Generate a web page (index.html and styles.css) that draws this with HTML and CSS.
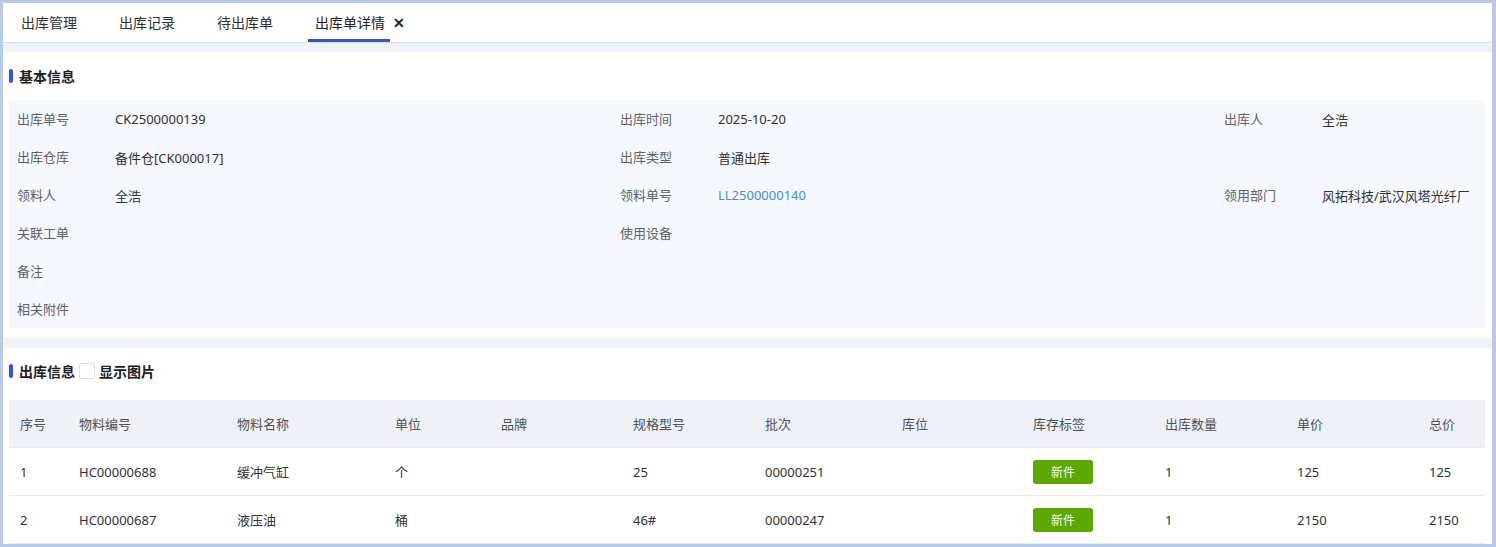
FILE: index.html
```html
<!DOCTYPE html>
<html lang="zh-CN">
<head>
<meta charset="utf-8">
<title>出库单详情</title>
<link rel="stylesheet" href="styles.css">
</head>
<body>
<div class="frame">
  <div class="tabs">
    <div class="tab">出库管理</div>
    <div class="tab">出库记录</div>
    <div class="tab">待出库单</div>
    <div class="tab active"><span class="tab-label">出库单详情</span><span class="tab-close">✕</span></div>
  </div>

  <div class="card card-basic">
    <div class="section-title"><span class="bar"></span>基本信息</div>
    <div class="info">
      <div class="item"><span class="label">出库单号</span><span class="value">CK2500000139</span></div>
      <div class="item"><span class="label">出库时间</span><span class="value">2025-10-20</span></div>
      <div class="item"><span class="label">出库人</span><span class="value">全浩</span></div>

      <div class="item"><span class="label">出库仓库</span><span class="value">备件仓[CK000017]</span></div>
      <div class="item"><span class="label">出库类型</span><span class="value">普通出库</span></div>
      <div class="item"></div>

      <div class="item"><span class="label">领料人</span><span class="value">全浩</span></div>
      <div class="item"><span class="label">领料单号</span><span class="value link">LL2500000140</span></div>
      <div class="item"><span class="label">领用部门</span><span class="value">风拓科技/武汉风塔光纤厂</span></div>

      <div class="item"><span class="label">关联工单</span><span class="value"></span></div>
      <div class="item"><span class="label">使用设备</span><span class="value"></span></div>
      <div class="item"></div>

      <div class="item"><span class="label">备注</span><span class="value"></span></div>
      <div class="item"></div>
      <div class="item"></div>

      <div class="item"><span class="label">相关附件</span><span class="value"></span></div>
      <div class="item"></div>
      <div class="item"></div>
    </div>
  </div>

  <div class="card card-table">
    <div class="section-title"><span class="bar"></span>出库信息<span class="checkbox"></span>显示图片</div>
    <div class="table">
      <div class="tr th">
        <div class="c c1">序号</div><div class="c c2">物料编号</div><div class="c c3">物料名称</div><div class="c c4">单位</div><div class="c c5">品牌</div><div class="c c6">规格型号</div><div class="c c7">批次</div><div class="c c8">库位</div><div class="c c9">库存标签</div><div class="c c10">出库数量</div><div class="c c11">单价</div><div class="c c12">总价</div>
      </div>
      <div class="tr">
        <div class="c c1">1</div><div class="c c2">HC00000688</div><div class="c c3">缓冲气缸</div><div class="c c4">个</div><div class="c c5"></div><div class="c c6">25</div><div class="c c7">00000251</div><div class="c c8"></div><div class="c c9"><span class="badge">新件</span></div><div class="c c10">1</div><div class="c c11">125</div><div class="c c12">125</div>
      </div>
      <div class="tr">
        <div class="c c1">2</div><div class="c c2">HC00000687</div><div class="c c3">液压油</div><div class="c c4">桶</div><div class="c c5"></div><div class="c c6">46#</div><div class="c c7">00000247</div><div class="c c8"></div><div class="c c9"><span class="badge">新件</span></div><div class="c c10">1</div><div class="c c11">2150</div><div class="c c12">2150</div>
      </div>
    </div>
  </div>
</div>
</body>
</html>
```

FILE: styles.css
```css
* { box-sizing: border-box; }
html, body { margin: 0; padding: 0; }
body {
  font-family: "Noto Sans", "Noto Sans CJK SC", sans-serif;
  color: #303133;
  background: #ffffff;
}
.frame {
  width: 1496px;
  height: 547px;
  border: 3px solid #b8c8ea;
  border-right-width: 4px;
  background: #eff3fa;
  overflow: hidden;
  display: flex;
  flex-direction: column;
}
.tabs {
  height: 40px;
  flex: none;
  background: #ffffff;
  border-bottom: 1px solid #dadde3;
  display: flex;
  align-items: stretch;
  padding-left: 11px;
  margin-bottom: 9px;
}
.tab {
  font-size: 14px;
  line-height: 20px;
  color: #303133;
  margin-right: 28px;
  display: flex;
  align-items: center;
  padding-top: 1px;
}
.tab:not(.active) { padding-left: 7px; padding-right: 7px; }
.tab-label {
  padding: 2px 5px 0 7px;
  height: 100%;
  display: flex;
  align-items: center;
  border-bottom: 3px solid #2457f0;
  color: #1d2129;
}
.tab-close {
  font-size: 14px;
  font-weight: 600;
  margin-left: 3px;
  color: #1d2129;
  padding-bottom: 1px;
}
.card {
  background: #ffffff;
  padding: 0 6px;
  flex: none;
}
.card-basic {
  height: 286px;
  padding-bottom: 11px;
}
.card-table {
  margin-top: 10px;
  flex: 1;
}
.section-title {
  height: 48px;
  display: flex;
  align-items: center;
  font-size: 14px;
  font-weight: 700;
  color: #1d1d1f;
}
.card-table .section-title { height: 52px; padding-bottom: 6px; }
.bar {
  width: 4px;
  height: 14px;
  border-radius: 2px;
  background: #2457f0;
  margin-right: 6px;
}
.checkbox {
  width: 16px;
  height: 16px;
  border: 1px solid #dcdfe6;
  border-radius: 2px;
  background: #fff;
  margin: 0 4px 0 4px;
}
.info {
  background: #f5f8fd;
  display: grid;
  grid-template-columns: 603px 604px 1fr;
  grid-auto-rows: 38px;
  margin-right: 1px;
}
.item {
  display: flex;
  align-items: center;
  font-size: 13px;
  padding-left: 8px;
}
.label {
  width: 98px;
  flex: none;
  color: #606266;
  position: relative;
  top: -1px;
}
.value { color: #303133; }
.value.link { color: #3a8ee6; }

.table { font-size: 13px; margin-right: 1px; }
.tr {
  display: flex;
  height: 48px;
  border-bottom: 1px solid #e8eaee;
}
.tr.th {
  background: #eff1f6;
  color: #4e5258;
}
.c {
  padding-left: 11px;
  display: flex;
  align-items: center;
  flex: none;
  white-space: nowrap;
}
.c1 { width: 59px; }
.c2 { width: 158px; }
.c3 { width: 158px; }
.c4 { width: 106px; }
.c5 { width: 132px; }
.c6 { width: 132px; }
.c7 { width: 137px; }
.c8 { width: 131px; }
.c9 { width: 132px; }
.c10 { width: 132px; }
.c11 { width: 132px; }
.c12 { flex: 1; }
.badge {
  display: inline-flex;
  align-items: center;
  justify-content: center;
  width: 60px;
  height: 24px;
  border-radius: 3px;
  background: #5ba802;
  color: #ffffff;
  font-size: 12px;
}
```
